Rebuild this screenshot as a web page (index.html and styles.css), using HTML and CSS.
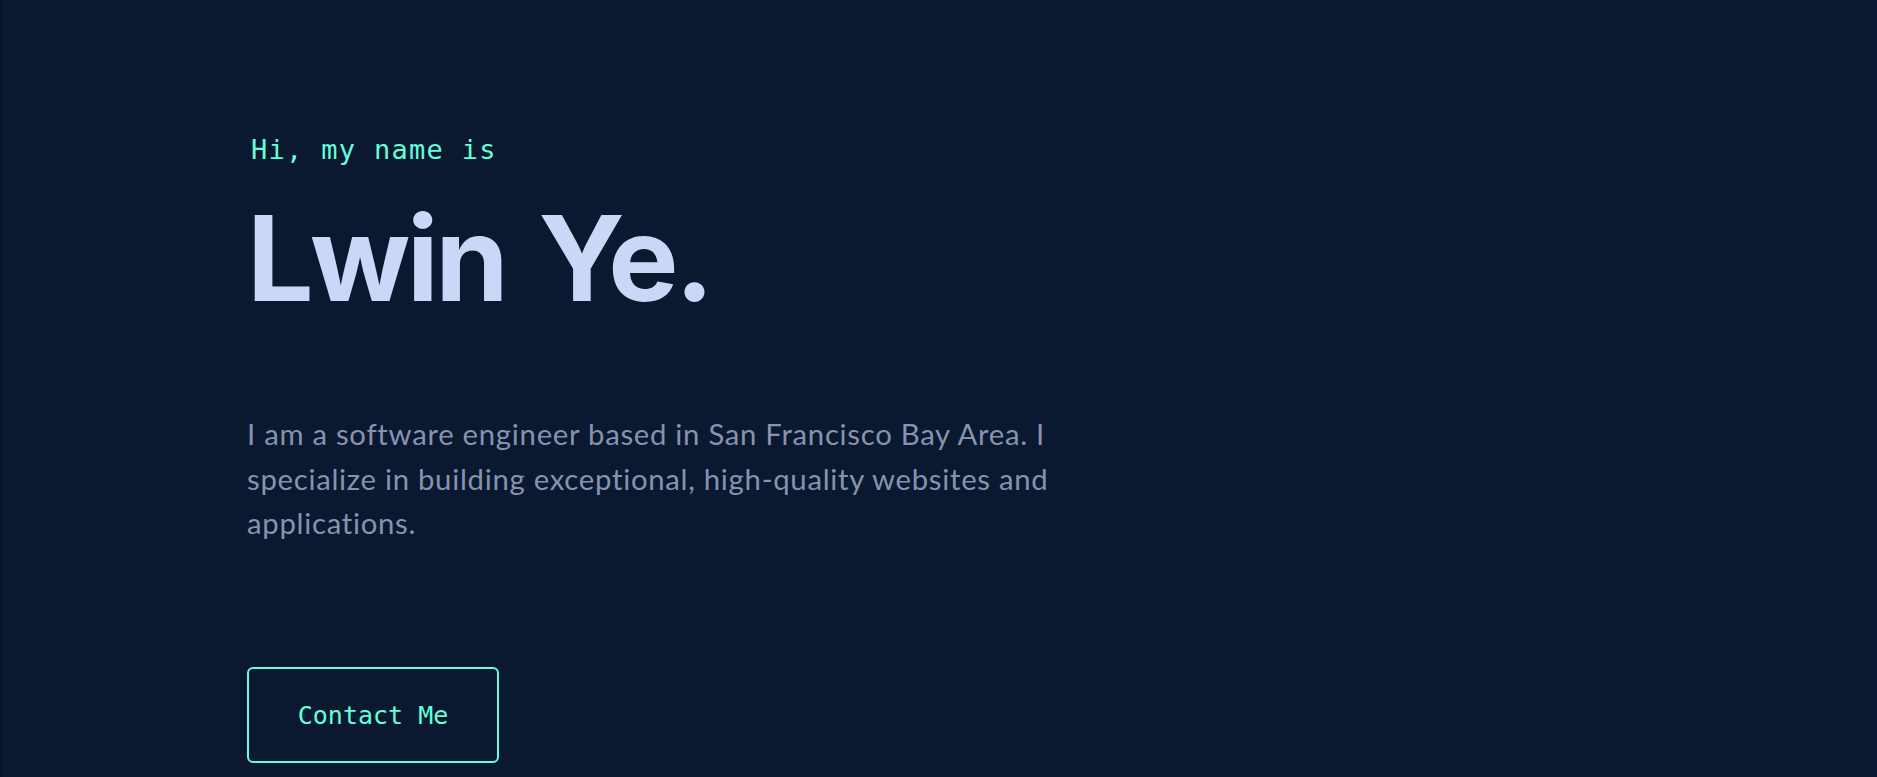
FILE: index.html
```html
<!DOCTYPE html>
<html lang="en">
<head>
<meta charset="utf-8">
<title>Lwin Ye</title>
<link rel="stylesheet" href="styles.css">
</head>
<body>
<main class="hero">
  <h1 class="hero-intro">Hi, my name is</h1>
  <h2 class="hero-name">Lwin Ye.</h2>
  <p class="hero-text">I am a software engineer based in San Francisco Bay Area. I specialize in building exceptional, high-quality websites and applications.</p>
  <a class="hero-button" href="#contact">Contact Me</a>
</main>
</body>
</html>
```
FILE: styles.css
```css
html, body {
  margin: 0;
  padding: 0;
  height: 100%;
}
body {
  background: #0a192f;
  overflow: hidden;
  box-shadow: inset 3px 0 0 #081528, inset -1px 0 0 #0b1a33;
}
.hero {
  display: flex;
  flex-direction: column;
  align-items: flex-start;
  padding: 136px 0 0 247px;
}
.hero-intro {
  margin: 0 0 30px 4px;
  font-family: "DejaVu Sans Mono", "Liberation Mono", monospace;
  font-weight: 400;
  font-size: 27px;
  line-height: 27px;
  letter-spacing: 1.3px;
  color: #64ffda;
}
.hero-name {
  margin: 0;
  font-family: Inter, "Liberation Sans", sans-serif;
  font-weight: 700;
  font-size: 118px;
  line-height: 130px;
  letter-spacing: -3.6px;
  word-spacing: 9px;
  color: #ccd6f6;
}
.hero-text {
  margin: 89px 0 0 0;
  max-width: 830px;
  font-family: Lato, "Liberation Sans", sans-serif;
  font-weight: 400;
  font-size: 29.3px;
  line-height: 44.5px;
  letter-spacing: 0.72px;
  color: #8892b0;
}
.hero-button {
  margin-top: 121px;
  padding: 34px 48.75px 33px;
  border: 2px solid #64ffda;
  border-radius: 6px;
  font-family: "DejaVu Sans Mono", "Liberation Mono", monospace;
  font-size: 25px;
  line-height: 25px;
  color: #64ffda;
  text-decoration: none;
}
```
